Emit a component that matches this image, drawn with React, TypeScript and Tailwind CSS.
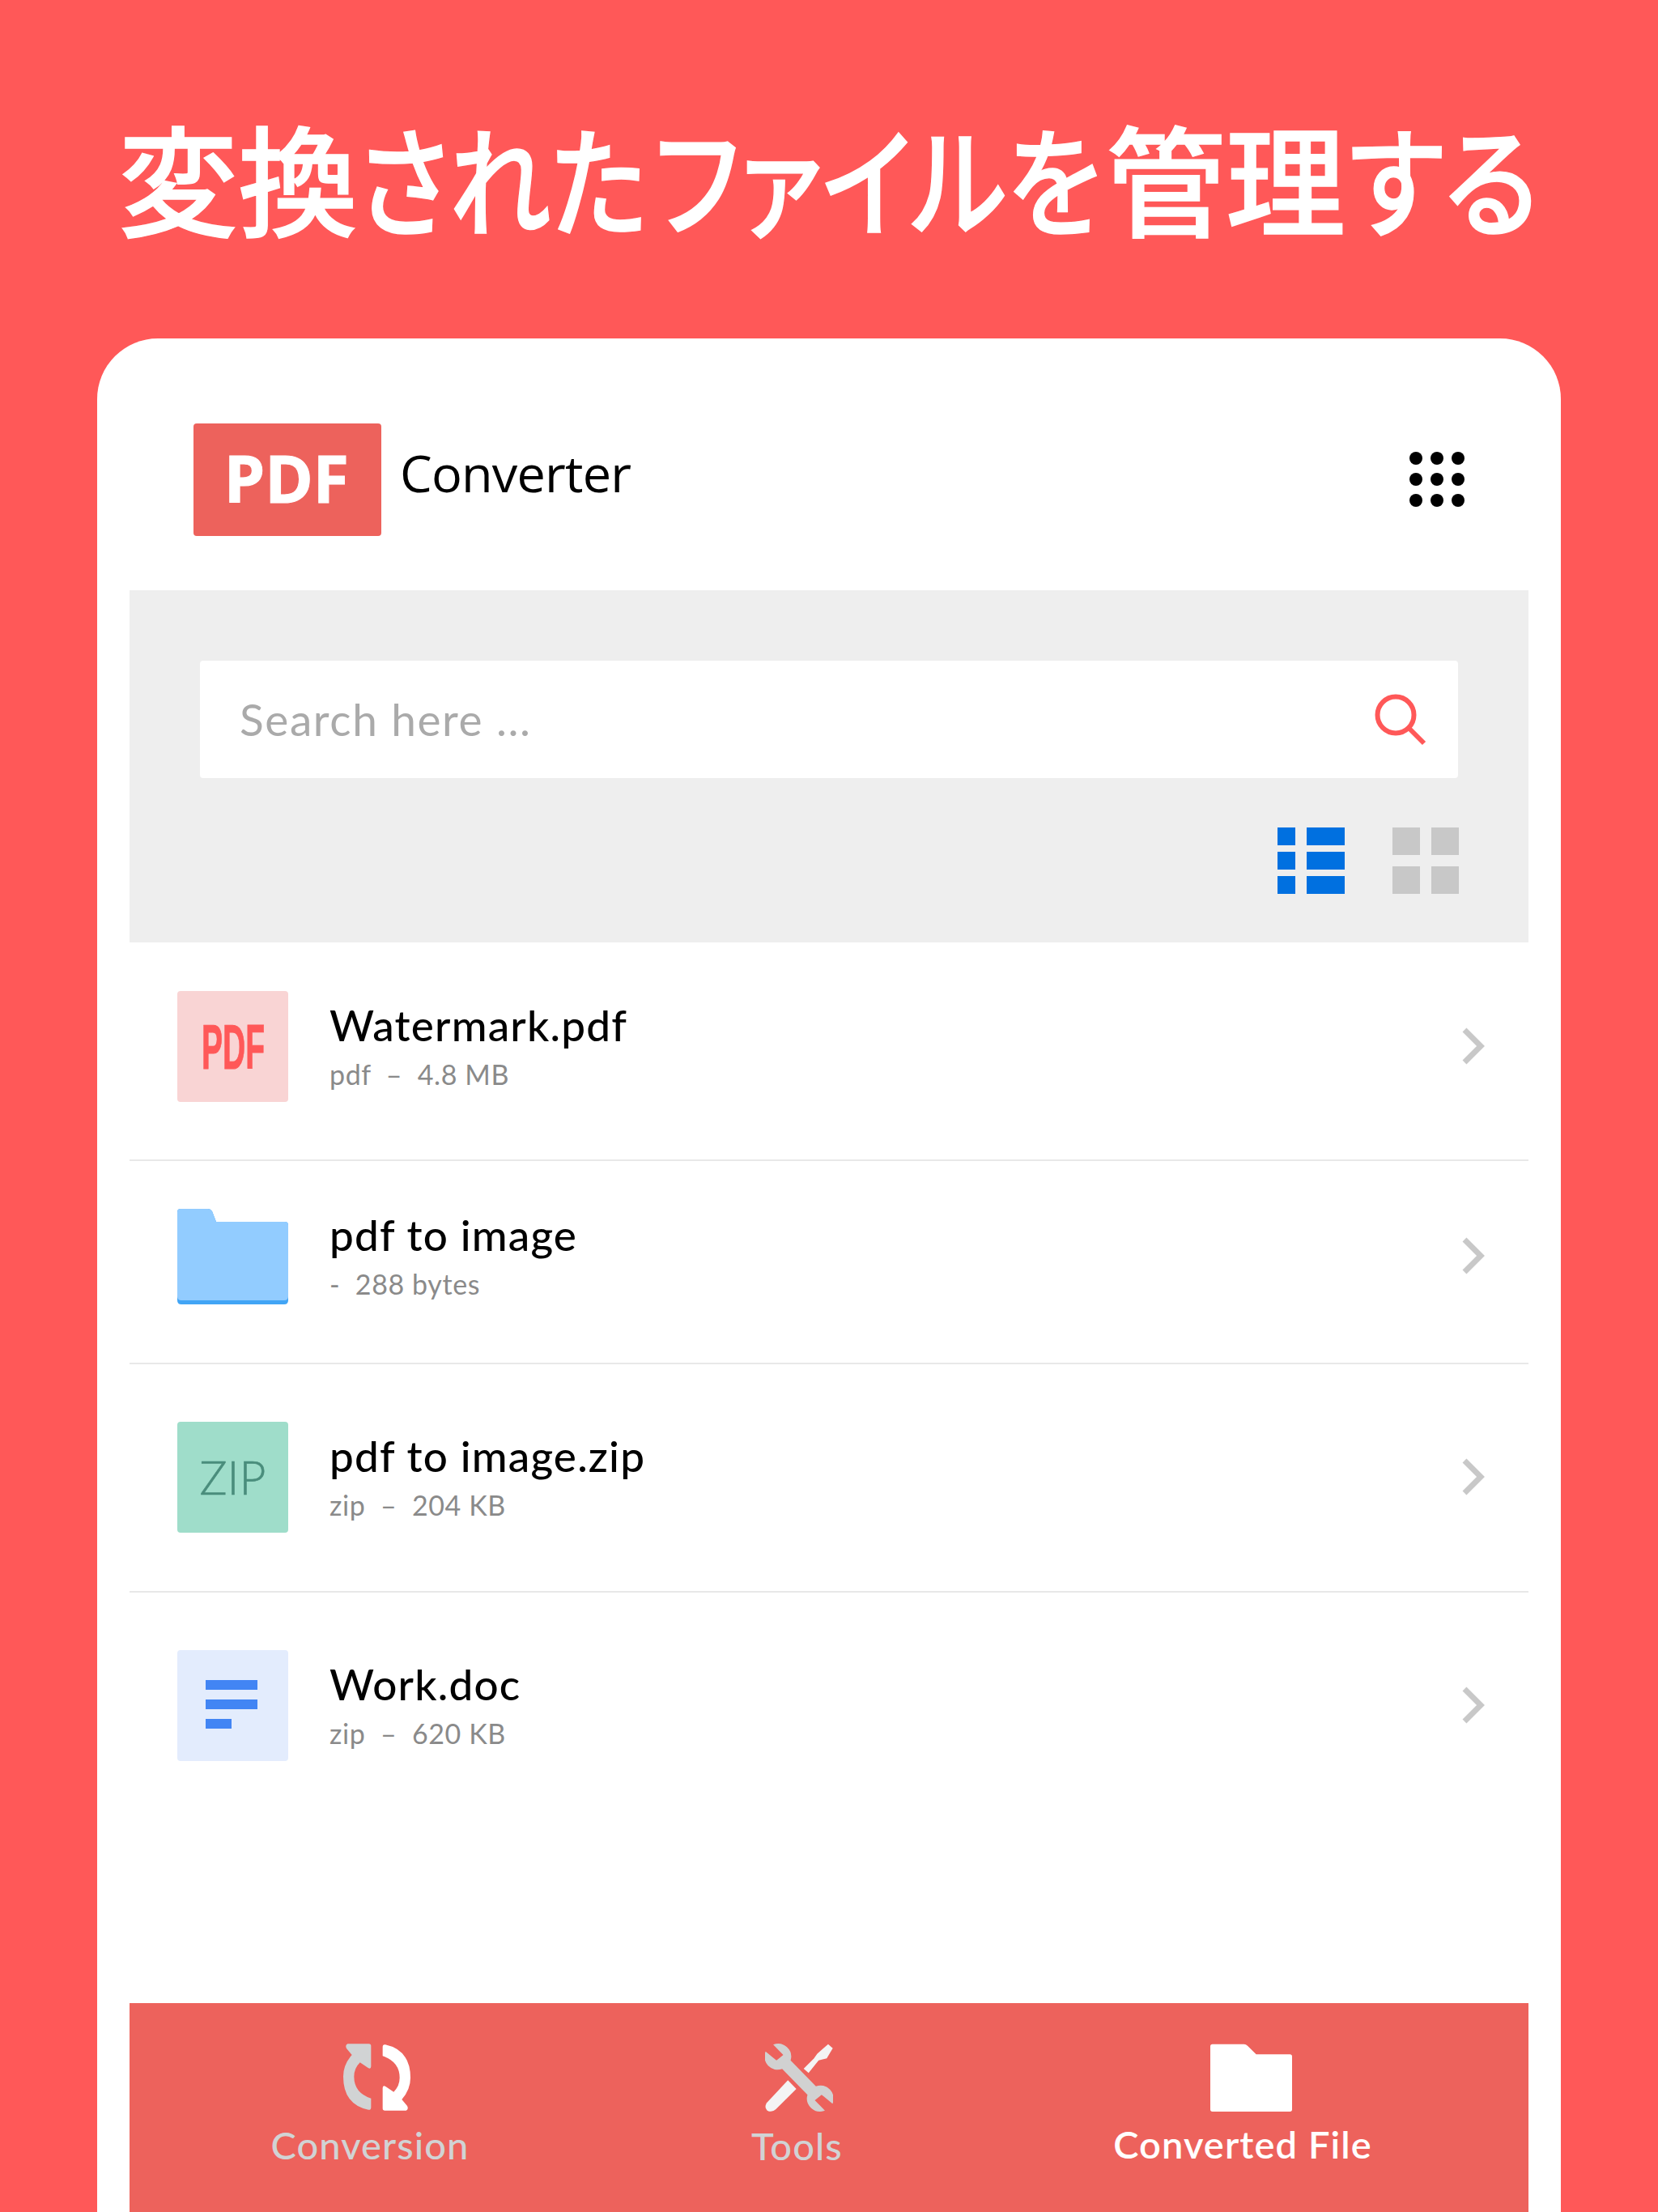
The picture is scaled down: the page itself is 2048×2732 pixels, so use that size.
const rows = [
  { name: "Watermark.pdf", meta: "pdf  –  4.8 MB", kind: "pdf", row: "h-[270px] pt-[60px]" },
  { name: "pdf to image", meta: "-  288 bytes", kind: "folder", row: "h-[251px] pt-[49px]" },
  { name: "pdf to image.zip", meta: "zip  –  204 KB", kind: "zip", row: "h-[282px] pt-[71px]" },
  { name: "Work.doc", meta: "zip  –  620 KB", kind: "doc", row: "h-[282px] pt-[71px]" },
];

function Thumb({ kind }: { kind: string }) {
  if (kind === "pdf") {
    return (
      <div className="flex h-[137px] w-[137px] items-center justify-center overflow-hidden rounded-[4px] bg-[#f9d4d4]">
        <span className="scale-x-[0.5] font-['Liberation_Sans',sans-serif] text-[78px] font-bold leading-none text-[#ff5858] [-webkit-text-stroke:1px_#ff5858]">
          PDF
        </span>
      </div>
    );
  }
  if (kind === "zip") {
    return (
      <div className="flex h-[137px] w-[137px] items-center justify-center rounded-[4px] bg-[#9fddca]">
        <span className="font-['Lato',sans-serif] text-[57px] font-light leading-none text-[#4a8d7c] [-webkit-text-stroke:0.6px_#4a8d7c]">
          ZIP
        </span>
      </div>
    );
  }
  if (kind === "doc") {
    return (
      <div className="flex h-[137px] w-[137px] flex-col gap-[12px] rounded-[4px] bg-[#e3ecfd] pl-[35px] pt-[37px]">
        <div className="h-[12px] w-[64px] bg-[#4285f4]" />
        <div className="h-[12px] w-[64px] bg-[#4285f4]" />
        <div className="h-[12px] w-[32px] bg-[#4285f4]" />
      </div>
    );
  }
  return (
    <div className="flex h-[137px] w-[137px] items-center">
      <svg width="137" height="118" viewBox="0 0 137 118">
        <path d="M4 0H38Q41 0 43 3L48 16H133Q137 16 137 20V113Q137 118 132 118H5Q0 118 0 113V4Q0 0 4 0Z" fill="#42a5f5" />
        <path d="M4 0H38Q41 0 43 3L48 16H133Q137 16 137 20V108Q137 113 132 113H5Q0 113 0 108V4Q0 0 4 0Z" fill="#92ccff" />
      </svg>
    </div>
  );
}

function Chevron() {
  return (
    <svg width="28" height="46" viewBox="0 0 28 46" className="ml-auto shrink-0">
      <path d="M3 3L23 23L3 43" fill="none" stroke="#c8c8c8" strokeWidth="7" />
    </svg>
  );
}

function FileRow({ item, last }: { item: (typeof rows)[number]; last: boolean }) {
  return (
    <div className={`flex items-start border-[#e8e8e8] pl-[59px] pr-[54px] ${item.row} ${last ? "" : "border-b-2"}`}>
      <Thumb kind={item.kind} />
      <div className="ml-[51px] flex h-[137px] flex-col justify-center font-['Lato',sans-serif]">
        <div className="whitespace-pre text-[53px] font-medium leading-[60px] tracking-[1.2px] text-black">{item.name}</div>
        <div className="mt-[9px] whitespace-pre text-[34px] leading-[44px] tracking-[0.6px] text-[#8a8a8a]">{item.meta}</div>
      </div>
      <div className="ml-auto flex h-[137px] items-center pb-[2px]">
        <Chevron />
      </div>
    </div>
  );
}

function Dots() {
  return (
    <div className="grid grid-cols-[16px_16px_16px] gap-[10px]">
      {[0, 1, 2, 3, 4, 5, 6, 7, 8].map((i) => (
        <div key={i} className="h-[16px] w-[16px] rounded-full bg-black" />
      ))}
    </div>
  );
}

function ListIcon() {
  return (
    <div className="grid w-[83px] grid-cols-[22px_47px] gap-x-[14px] gap-y-[8px]">
      {[0, 1, 2, 3, 4, 5].map((i) => (
        <div key={i} className="h-[22px] bg-[#0070e0]" />
      ))}
    </div>
  );
}

function GridIcon() {
  return (
    <div className="grid grid-cols-[34px_34px] gap-x-[14px] gap-y-[14px]">
      {[0, 1, 2, 3].map((i) => (
        <div key={i} className="h-[34px] bg-[#c8c8c8]" />
      ))}
    </div>
  );
}

function ConversionIcon() {
  const arrow =
    "M16 1H95Q103 1 103 9V84Q103 96 92 90L62 70Q40 92 40 122Q40 182 103 203V236Q103 247 93 245Q0 225 0 122Q0 78 32 42L12 18Q6 6 16 1Z";
  return (
    <svg width="83" height="83" viewBox="0 0 249 249">
      <path d={arrow} fill="#d1d3d4" />
      <path d={arrow} fill="#fff" transform="rotate(180 124.5 124.5)" />
    </svg>
  );
}

function ToolsIcon() {
  return (
    <svg width="84" height="84" viewBox="0 0 250 250">
      <path d="M142 92L180 54L192 37L232 2L249 17L227 54L197 62L160 108Z" fill="#f4f4f4" />
      <path d="M84 135L115 167L40 241Q25 255 8 246Q-4 235 6 218Z" fill="#f4f4f4" />
      <path
        d="M2 29L42 62L67 42L30 4A48 48 0 0 1 94 62L187 157A48 48 0 0 1 248 221L208 188L183 208L220 246A48 48 0 0 1 156 188L63 93A48 48 0 0 1 2 29Z"
        fill="#d1d1d1"
      />
    </svg>
  );
}

function FolderIcon() {
  return (
    <svg width="101" height="84" viewBox="0 0 303 252">
      <path d="M8 2H125Q132 2 138 8L170 40H295Q303 40 303 48V244Q303 252 295 252H8Q0 252 0 244V10Q0 2 8 2Z" fill="#fff" />
    </svg>
  );
}

export default function App() {
  return (
    <div className="h-[2732px] w-[2048px] overflow-hidden bg-[#ff5858]">
      <div className="h-[418px] pl-[146px] pt-[112px]">
        <h1 className="flex whitespace-nowrap font-['Noto_Sans_CJK_JP',sans-serif] text-[148px] font-medium leading-[210px] text-white [-webkit-text-stroke:1.5px_white] [font-feature-settings:'palt']">
          <span className="w-[296px] [font-feature-settings:normal]">変換</span>
          <span className="w-[366px] origin-left scale-x-[0.85]">された</span>
          <span className="w-[558px] origin-left scale-x-[0.85]">ファイルを</span>
          <span className="w-[300px] [font-feature-settings:normal]">管理</span>
          <span className="w-[232px] origin-left scale-x-[0.88]">する</span>
        </h1>
      </div>

      <div className="mx-[120px] flex h-[2314px] flex-col rounded-t-[75px] bg-white px-[40px]">
        <div className="flex h-[311px] items-start pl-[79px] pr-[79px] pt-[105px]">
          <div className="flex h-[139px] w-[232px] items-center justify-center rounded-[4px] bg-[#ed625c] pb-[6px] pr-[3px]">
            <span className="font-['Open_Sans',sans-serif] text-[81px] font-bold leading-none tracking-[-0.5px] text-white [-webkit-text-stroke:1px_white]">
              PDF
            </span>
          </div>
          <span className="ml-[23px] mt-[17px] font-['Open_Sans',sans-serif] text-[63px] leading-[88px] tracking-[-0.8px] text-black">
            Converter
          </span>
          <div className="ml-auto mt-[35px]">
            <Dots />
          </div>
        </div>

        <div className="h-[435px] bg-[#eeeeee] pl-[87px] pr-[86px] pt-[87px]">
          <div className="mr-[1px] flex h-[145px] items-center rounded-[4px] bg-white pl-[49px] pr-[39px]">
            <span className="font-['Lato',sans-serif] text-[55px] tracking-[1.6px] text-[#aaaaaa]">Search here ...</span>
            <svg width="64" height="64" viewBox="0 0 64 64" className="ml-auto">
              <circle cx="26" cy="26" r="22.5" fill="none" stroke="#ff5858" strokeWidth="6" />
              <path d="M43 43L61 61" fill="none" stroke="#ff5858" strokeWidth="6" />
            </svg>
          </div>
          <div className="mt-[61px] flex justify-end gap-[59px]">
            <ListIcon />
            <GridIcon />
          </div>
        </div>

        <div className="flex-1">
          {rows.map((item, i) => (
            <FileRow key={item.name} item={item} last={i === rows.length - 1} />
          ))}
        </div>

        <div className="flex h-[258px] bg-[#ed625c] pl-[176px] pt-[50px] font-['Lato',sans-serif] text-[47px] font-medium leading-[60px] tracking-[1.1px]">
          <div className="flex w-[242px] flex-col items-center text-[#d1d3d4]">
            <div className="ml-[16px]">
              <ConversionIcon />
            </div>
            <span className="mt-[12px] whitespace-nowrap">Conversion</span>
          </div>
          <div className="ml-[349px] flex w-[115px] flex-col items-center text-[#d1d3d4]">
            <div className="ml-[4px]">
              <ToolsIcon />
            </div>
            <span className="mt-[12px] whitespace-nowrap">Tools</span>
          </div>
          <div className="ml-[334px] flex w-[318px] flex-col items-center text-white">
            <div className="ml-[20px]">
              <FolderIcon />
            </div>
            <span className="mt-[10px] whitespace-nowrap font-semibold">Converted File</span>
          </div>
        </div>
      </div>
    </div>
  );
}
